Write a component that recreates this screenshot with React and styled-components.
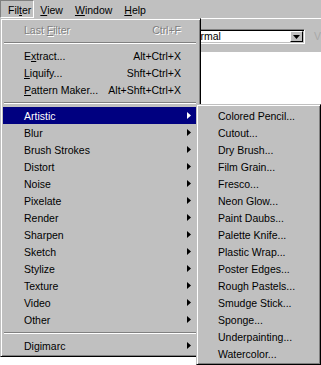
import React from 'react'
import styled, {createGlobalStyle} from 'styled-components'

const GlobalStyle = createGlobalStyle`
    html, body {
        margin: 0;
        padding: 0;
        background: #ffffff;
    }
    body {
        font-family: "Liberation Sans", Arial, sans-serif;
        font-size: 10.5px;
    }
`

const filterItems = ['Artistic', 'Blur', 'Brush Strokes', 'Distort', 'Noise', 'Pixelate', 'Render',
    'Sharpen', 'Sketch', 'Stylize', 'Texture', 'Video', 'Other']

const artisticItems = ['Colored Pencil...', 'Cutout...', 'Dry Brush...', 'Film Grain...', 'Fresco...',
    'Neon Glow...', 'Paint Daubs...', 'Palette Knife...', 'Plastic Wrap...', 'Poster Edges...',
    'Rough Pastels...', 'Smudge Stick...', 'Sponge...', 'Underpainting...', 'Watercolor...']

function Arrow({active}) {
    return (
        <ArrowIcon width="4" height="7" viewBox="0 0 4 7">
            <path d="M0 0 L4 3.5 L0 7 Z" fill={active ? '#ffffff' : '#000000'}/>
        </ArrowIcon>
    )
}

function App() {
    return (
        <Screen>
            <GlobalStyle/>
            <MenuBar>
                <BarItem pressed><span>Fil<u>t</u>er</span></BarItem>
                <BarItem><span><u>V</u>iew</span></BarItem>
                <BarItem><span><u>W</u>indow</span></BarItem>
                <BarItem><span><u>H</u>elp</span></BarItem>
            </MenuBar>

            <Toolbar>
                <Combo>
                    <ComboText>Normal</ComboText>
                    <ComboButton>
                        <svg width="7" height="4" viewBox="0 0 7 4">
                            <path d="M0 0 H7 L3.5 4 Z" fill="#000"/>
                        </svg>
                    </ComboButton>
                </Combo>
                <FaintLabel>V</FaintLabel>
            </Toolbar>
            <Canvas/>

            <Dropdown>
                <Item disabled>
                    <Label>Last <u>F</u>ilter</Label>
                    <Shortcut>Ctrl+F</Shortcut>
                </Item>
                <Separator/>
                <Item>
                    <Label>E<u>x</u>tract...</Label>
                    <Shortcut>Alt+Ctrl+X</Shortcut>
                </Item>
                <Item>
                    <Label><u>L</u>iquify...</Label>
                    <Shortcut>Shft+Ctrl+X</Shortcut>
                </Item>
                <Item>
                    <Label><u>P</u>attern Maker...</Label>
                    <Shortcut>Alt+Shft+Ctrl+X</Shortcut>
                </Item>
                <Separator/>
                {filterItems.map((name, i) => (
                    <Item key={name} active={i === 0}>
                        <Label>{name}</Label>
                        <Arrow active={i === 0}/>
                    </Item>
                ))}
                <Separator/>
                <Item>
                    <Label>Digimarc</Label>
                    <Arrow/>
                </Item>
            </Dropdown>

            <Submenu>
                {artisticItems.map(name => (
                    <SubItem key={name}>{name}</SubItem>
                ))}
            </Submenu>
        </Screen>
    )
}

export default App

const Screen = styled.div`
    position: relative;
    width: 321px;
    height: 365px;
    overflow: hidden;
    display: flex;
    flex-direction: column;
    background: #ffffff;
    color: #000000;
`

const MenuBar = styled.div`
    height: 18px;
    display: flex;
    align-items: stretch;
    background: #c0c0c0;
`

const BarItem = styled.div`
    display: flex;
    align-items: center;
    padding: ${props => props.pressed ? '0 2px 0 7px' : '0 5px'};
    box-sizing: border-box;
    border-top: 1px solid ${props => props.pressed ? '#808080' : 'transparent'};
    border-left: 1px solid ${props => props.pressed ? '#808080' : 'transparent'};
    border-bottom: 1px solid ${props => props.pressed ? '#ffffff' : 'transparent'};
    border-right: 1px solid ${props => props.pressed ? '#ffffff' : 'transparent'};
    span {
        padding-top: 1px;
    }
`

const Toolbar = styled.div`
    height: 34px;
    box-sizing: border-box;
    display: flex;
    align-items: flex-start;
    padding-top: 10px;
    background: #c0c0c0;
    border-top: 1px solid #ffffff;
`

const Combo = styled.div`
    margin-left: 182px;
    width: 125px;
    height: 15px;
    box-sizing: border-box;
    display: flex;
    align-items: center;
    justify-content: space-between;
    background: #ffffff;
    border-top: 1px solid #808080;
    border-left: 1px solid #808080;
    border-bottom: 1px solid #ffffff;
    border-right: 1px solid #ffffff;
    box-shadow: inset 1px 1px 0 #000000, inset -1px -1px 0 #c0c0c0;
`

const ComboText = styled.span`
    padding-left: 4px;
    line-height: 13px;
`

const ComboButton = styled.div`
    width: 13px;
    height: 11px;
    margin-right: 1px;
    box-sizing: border-box;
    display: flex;
    align-items: center;
    justify-content: center;
    background: #c0c0c0;
    border: 1px solid;
    border-color: #ffffff #000000 #000000 #ffffff;
`

const FaintLabel = styled.span`
    margin-left: 9px;
    line-height: 15px;
    color: #a8a8a8;
`

const Canvas = styled.div`
    flex: 1;
    background: #ffffff;
`

const Dropdown = styled.div`
    position: absolute;
    left: 0;
    top: 18px;
    width: 201px;
    box-sizing: border-box;
    padding: 2px 3px 2px 2px;
    background: #c0c0c0;
    border: 1px solid;
    border-color: #c0c0c0 #000000 #000000 #c0c0c0;
    box-shadow: inset 1px 1px 0 #ffffff, inset -1px -1px 0 #808080;
`

const Item = styled.div`
    height: 17px;
    display: flex;
    align-items: center;
    padding: 0 5px 0 21px;
    background: ${props => props.active ? '#000080' : 'transparent'};
    color: ${props => props.disabled ? '#808080' : props.active ? '#ffffff' : '#000000'};
    text-shadow: ${props => props.disabled ? '1px 1px 0 #ffffff' : 'none'};
`

const Label = styled.span`
    flex: 1;
    white-space: nowrap;
`

const Shortcut = styled.span`
    margin-right: 11px;
    white-space: nowrap;
`

const ArrowIcon = styled.svg`
    flex-shrink: 0;
    margin-right: 1px;
`

const Separator = styled.div`
    height: 9px;
    display: flex;
    flex-direction: column;
    justify-content: center;
    padding: 0 1px;
    &::before {
        content: '';
        height: 1px;
        background: #808080;
    }
    &::after {
        content: '';
        height: 1px;
        background: #ffffff;
    }
`

const Submenu = styled.div`
    position: absolute;
    left: 196px;
    top: 104px;
    width: 125px;
    box-sizing: border-box;
    padding: 2px;
    background: #c0c0c0;
    border: 1px solid;
    border-color: #c0c0c0 #000000 #000000 #c0c0c0;
    box-shadow: inset 1px 1px 0 #ffffff, inset -1px -1px 0 #808080;
`

const SubItem = styled.div`
    height: 17px;
    display: flex;
    align-items: center;
    padding-left: 19px;
    white-space: nowrap;
`
